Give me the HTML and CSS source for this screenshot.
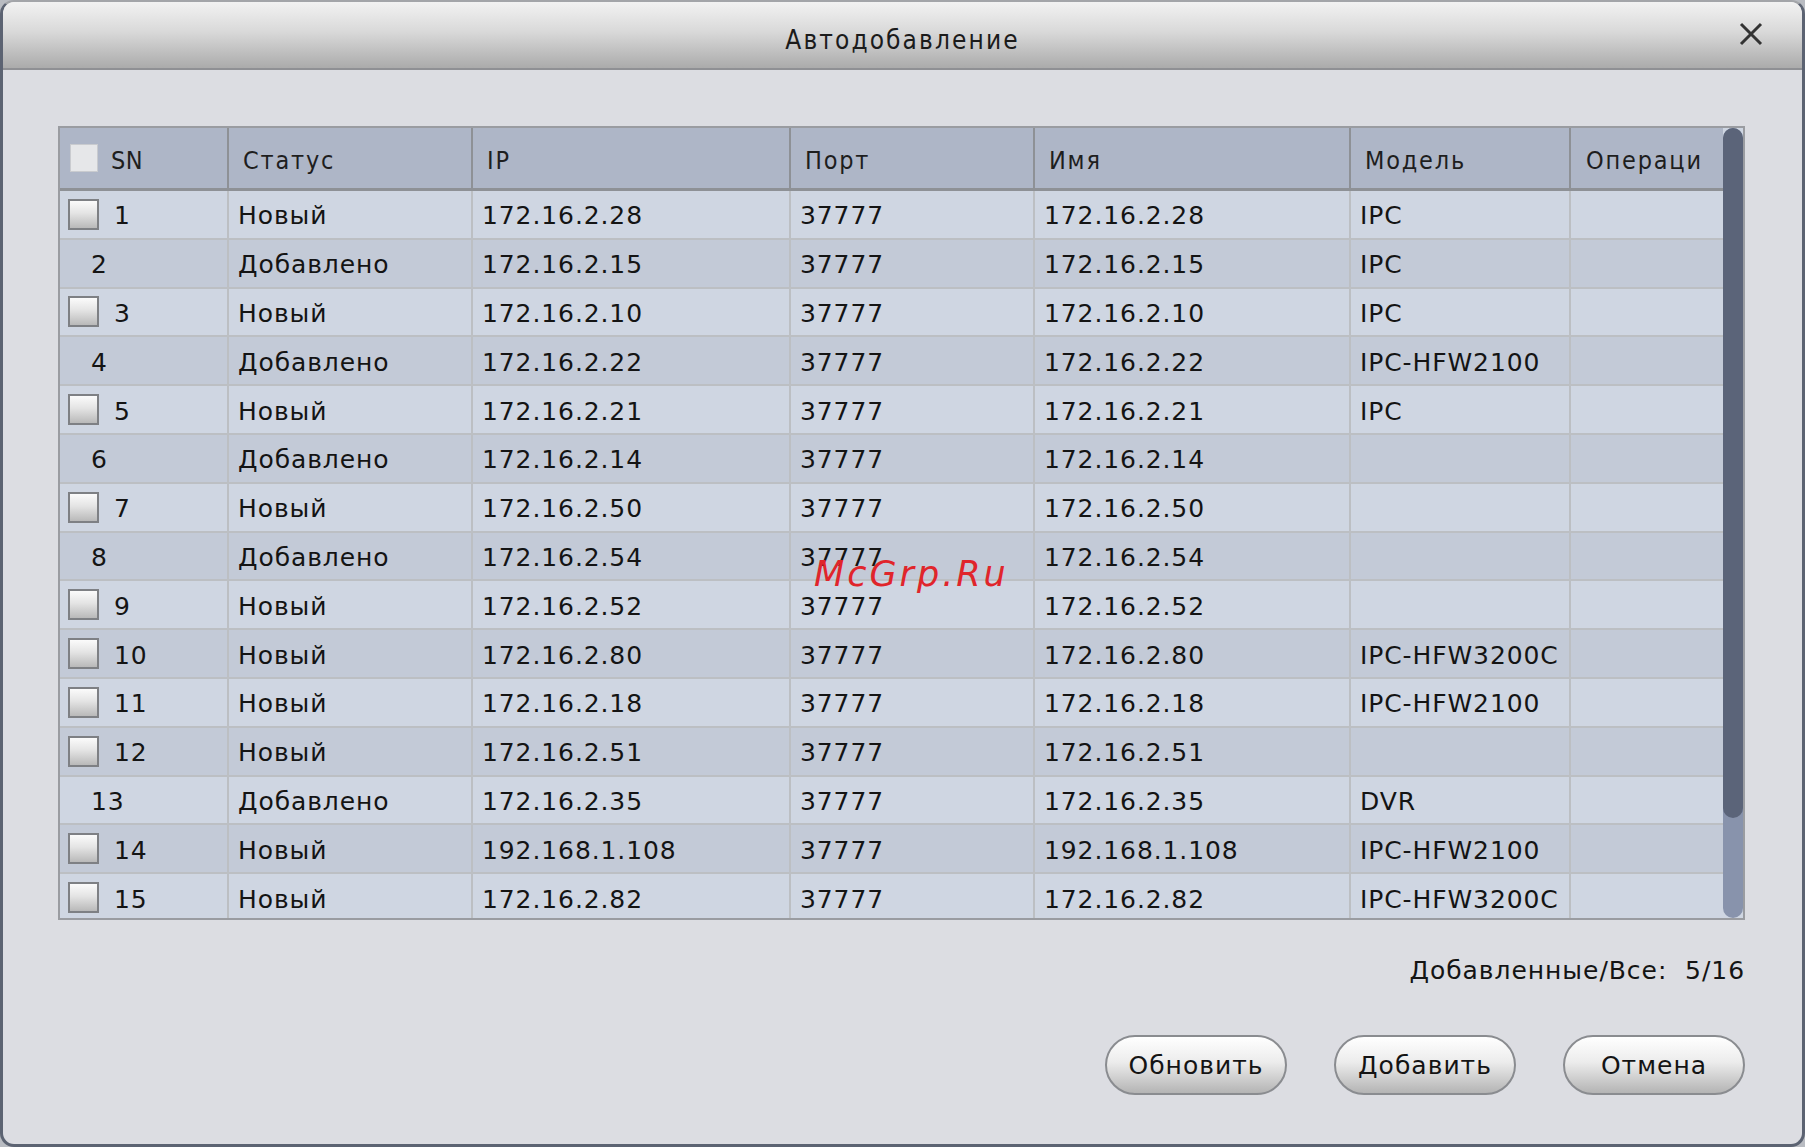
FILE: index.html
```html
<!DOCTYPE html>
<html lang="ru">
<head>
<meta charset="utf-8">
<title>Автодобавление</title>
<link rel="stylesheet" href="styles.css">
</head>
<body>
<div class="dialog">
  <div class="titlebar">
    <span class="title">Автодобавление</span>
    <svg class="close" width="26" height="26" viewBox="0 0 26 26"><path d="M3 3 L23 23 M23 3 L3 23" stroke="#333" stroke-width="3" fill="none"/></svg>
  </div>
  <div class="content">
    <div class="table">
      <div class="grid">
        <div class="row head">
          <div class="c c1"><span class="cb cb-head"></span><span class="sn">SN</span></div>
          <div class="c c2">Статус</div>
          <div class="c c3">IP</div>
          <div class="c c4">Порт</div>
          <div class="c c5">Имя</div>
          <div class="c c6">Модель</div>
          <div class="c c7">Операци</div>
        </div>
        <div class="row odd"><div class="c c1"><span class="cb"></span><span class="num">1</span></div><div class="c c2">Новый</div><div class="c c3">172.16.2.28</div><div class="c c4">37777</div><div class="c c5">172.16.2.28</div><div class="c c6">IPC</div><div class="c c7"></div></div>
        <div class="row even"><div class="c c1 nocb"><span class="num">2</span></div><div class="c c2">Добавлено</div><div class="c c3">172.16.2.15</div><div class="c c4">37777</div><div class="c c5">172.16.2.15</div><div class="c c6">IPC</div><div class="c c7"></div></div>
        <div class="row odd"><div class="c c1"><span class="cb"></span><span class="num">3</span></div><div class="c c2">Новый</div><div class="c c3">172.16.2.10</div><div class="c c4">37777</div><div class="c c5">172.16.2.10</div><div class="c c6">IPC</div><div class="c c7"></div></div>
        <div class="row even"><div class="c c1 nocb"><span class="num">4</span></div><div class="c c2">Добавлено</div><div class="c c3">172.16.2.22</div><div class="c c4">37777</div><div class="c c5">172.16.2.22</div><div class="c c6">IPC-HFW2100</div><div class="c c7"></div></div>
        <div class="row odd"><div class="c c1"><span class="cb"></span><span class="num">5</span></div><div class="c c2">Новый</div><div class="c c3">172.16.2.21</div><div class="c c4">37777</div><div class="c c5">172.16.2.21</div><div class="c c6">IPC</div><div class="c c7"></div></div>
        <div class="row even"><div class="c c1 nocb"><span class="num">6</span></div><div class="c c2">Добавлено</div><div class="c c3">172.16.2.14</div><div class="c c4">37777</div><div class="c c5">172.16.2.14</div><div class="c c6"></div><div class="c c7"></div></div>
        <div class="row odd"><div class="c c1"><span class="cb"></span><span class="num">7</span></div><div class="c c2">Новый</div><div class="c c3">172.16.2.50</div><div class="c c4">37777</div><div class="c c5">172.16.2.50</div><div class="c c6"></div><div class="c c7"></div></div>
        <div class="row even"><div class="c c1 nocb"><span class="num">8</span></div><div class="c c2">Добавлено</div><div class="c c3">172.16.2.54</div><div class="c c4">37777</div><div class="c c5">172.16.2.54</div><div class="c c6"></div><div class="c c7"></div></div>
        <div class="row odd"><div class="c c1"><span class="cb"></span><span class="num">9</span></div><div class="c c2">Новый</div><div class="c c3">172.16.2.52</div><div class="c c4">37777</div><div class="c c5">172.16.2.52</div><div class="c c6"></div><div class="c c7"></div></div>
        <div class="row even"><div class="c c1"><span class="cb"></span><span class="num">10</span></div><div class="c c2">Новый</div><div class="c c3">172.16.2.80</div><div class="c c4">37777</div><div class="c c5">172.16.2.80</div><div class="c c6">IPC-HFW3200C</div><div class="c c7"></div></div>
        <div class="row odd"><div class="c c1"><span class="cb"></span><span class="num">11</span></div><div class="c c2">Новый</div><div class="c c3">172.16.2.18</div><div class="c c4">37777</div><div class="c c5">172.16.2.18</div><div class="c c6">IPC-HFW2100</div><div class="c c7"></div></div>
        <div class="row even"><div class="c c1"><span class="cb"></span><span class="num">12</span></div><div class="c c2">Новый</div><div class="c c3">172.16.2.51</div><div class="c c4">37777</div><div class="c c5">172.16.2.51</div><div class="c c6"></div><div class="c c7"></div></div>
        <div class="row odd"><div class="c c1 nocb"><span class="num">13</span></div><div class="c c2">Добавлено</div><div class="c c3">172.16.2.35</div><div class="c c4">37777</div><div class="c c5">172.16.2.35</div><div class="c c6">DVR</div><div class="c c7"></div></div>
        <div class="row even"><div class="c c1"><span class="cb"></span><span class="num">14</span></div><div class="c c2">Новый</div><div class="c c3">192.168.1.108</div><div class="c c4">37777</div><div class="c c5">192.168.1.108</div><div class="c c6">IPC-HFW2100</div><div class="c c7"></div></div>
        <div class="row odd"><div class="c c1"><span class="cb"></span><span class="num">15</span></div><div class="c c2">Новый</div><div class="c c3">172.16.2.82</div><div class="c c4">37777</div><div class="c c5">172.16.2.82</div><div class="c c6">IPC-HFW3200C</div><div class="c c7"></div></div>
      </div>
      <div class="scrollbar"><div class="thumb"></div></div>
    </div>
    <div class="summary">Добавленные/Все:&nbsp; 5/16</div>
    <div class="buttons">
      <button class="btn">Обновить</button>
      <button class="btn">Добавить</button>
      <button class="btn">Отмена</button>
    </div>
  </div>
  <div class="watermark">McGrp.Ru</div>
</div>
</body>
</html>
```
FILE: styles.css
```css
html, body {
  margin: 0;
  padding: 0;
  background: #b9bcc2;
}
body {
  width: 1805px;
  height: 1147px;
  overflow: hidden;
  font-family: "DejaVu Sans", "Liberation Sans", sans-serif;
  color: #141414;
}
.dialog {
  position: relative;
  box-sizing: border-box;
  width: 1805px;
  height: 1147px;
  border: 3px solid #5c6372;
  border-top: 2px solid #a3a5a9;
  border-radius: 14px;
  background: #dcdde2;
  overflow: hidden;
  display: flex;
  flex-direction: column;
}
.titlebar {
  position: relative;
  height: 66px;
  border-bottom: 2px solid #8f9094;
  background: linear-gradient(#f2f2f2 0%, #d9d9d9 45%, #ababab 100%);
  display: flex;
  align-items: center;
  justify-content: center;
}
.title {
  font-family: "DejaVu Sans Condensed", "DejaVu Sans", sans-serif;
  font-stretch: condensed;
  font-size: 26px;
  color: #1b1b1b;
  padding-top: 10px;
  letter-spacing: 2.1px;
}
.close {
  position: absolute;
  right: 38px;
  top: 19px;
}
.content {
  flex: 1;
  display: flex;
  flex-direction: column;
  padding: 56px 57px 0 55px;
}
.table {
  box-sizing: border-box;
  height: 794px;
  border: 2px solid #9a9ca1;
  display: flex;
  background: #cfd6e2;
}
.grid {
  width: 1663px;
  height: 790px;
  overflow: hidden;
}
.row {
  display: flex;
  box-sizing: border-box;
  height: 48.8px;
  border-bottom: 2px solid #bcbfc3;
  font-size: 25px;
}
.row.odd { background: #cfd6e2; }
.row.even { background: #c3cad7; }
.row.head {
  height: 63px;
  background: #aeb6c7;
  border-bottom: 3px solid #8e9196;
  font-family: "DejaVu Sans Condensed", "DejaVu Sans", sans-serif;
  font-stretch: condensed;
  font-size: 25px;
  color: #1e1e1e;
}
.c {
  box-sizing: border-box;
  display: flex;
  align-items: center;
  padding-left: 9px;
  padding-top: 3px;
  border-right: 2px solid #bcbfc3;
  white-space: nowrap;
  overflow: hidden;
  letter-spacing: 0.9px;
}
.head .c {
  border-right-color: #8e9196;
  padding-left: 14px;
  padding-top: 4px;
  letter-spacing: 1.8px;
}
.c1 { width: 169px; padding-left: 8px; }
.c2 { width: 244px; }
.c3 { width: 318px; }
.c4 { width: 244px; }
.c5 { width: 316px; }
.c6 { width: 220px; }
.c7 { width: 152px; border-right: none; }
.head .c1 { padding-left: 9px; padding-top: 0; }
.head .c7 { padding-left: 15px; }
.c1.nocb { padding-left: 31px; }
.cb {
  box-sizing: border-box;
  width: 31px;
  height: 31px;
  border: 2px solid #7e8084;
  background: linear-gradient(#fbfbfb 0%, #e4e4e4 45%, #b9b9b9 100%);
  margin-right: 15px;
  margin-top: -3px;
  flex: none;
}
.cb-head {
  width: 28px;
  height: 28px;
  border: 1px solid #c9cbcf;
  background: #e6e7e9;
  margin-right: 13px;
  margin-left: 1px;
  margin-top: 0;
}
.sn { letter-spacing: 0.5px; padding-top: 4px; }
.scrollbar {
  width: 20px;
  height: 790px;
  background: #8893ac;
  border-radius: 10px;
}
.thumb {
  height: 690px;
  background: #5b6479;
  border-radius: 10px;
}
.summary {
  margin-top: 36px;
  text-align: right;
  font-size: 25px;
  letter-spacing: 0.95px;
  height: 30px;
  line-height: 30px;
}
.buttons {
  margin-top: 49px;
  display: flex;
  justify-content: flex-end;
  gap: 47px;
}
.btn {
  box-sizing: border-box;
  width: 182px;
  height: 60px;
  border: 2px solid #8a8c90;
  border-radius: 30px;
  background: linear-gradient(#ffffff 0%, #ececec 45%, #b4b4b4 100%);
  font-family: "DejaVu Sans", sans-serif;
  font-size: 25px;
  letter-spacing: 1px;
  color: #141414;
  padding: 0;
}
.watermark {
  position: absolute;
  left: 811px;
  top: 552px;
  font-family: "DejaVu Sans", sans-serif;
  font-style: italic;
  font-size: 35px;
  letter-spacing: 3px;
  color: #e0252b;
}
```
